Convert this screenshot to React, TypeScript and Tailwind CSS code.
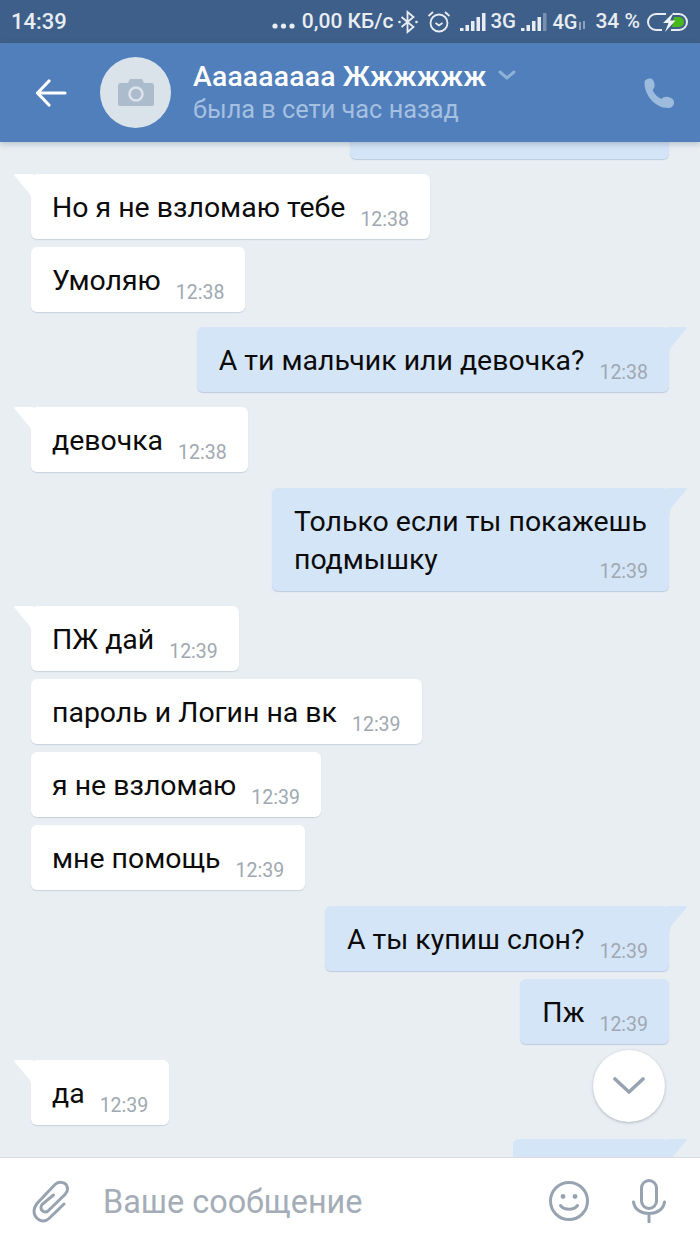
import { ReactNode } from "react";

type Message = {
  text: ReactNode;
  time: string;
  out?: boolean;
  tail?: boolean;
  multiline?: boolean;
  gap: number;
};

const BG = "#e9eef3";

function Tail({ out }: { out?: boolean }) {
  if (out) {
    return (
      <svg className="absolute top-0 -right-[19px]" width="21" height="27" viewBox="0 0 21 27">
        <path d="M0 0H18.500C19.600 0 20.100 .8 19.400 1.700L4.600 19.500C3.400 21 3 22.500 3 25V27H0Z" fill="#d5e5f8" />
      </svg>
    );
  }
  return (
    <svg className="absolute top-0 -left-[18px]" width="20" height="27" viewBox="0 0 20 27">
      <path d="M20 0H2.500C1.400 0 .9 .8 1.600 1.700L16.400 19.500C17.600 21 18 22.500 18 25V27H20Z" fill="#fff" />
    </svg>
  );
}

function Bubble({ m }: { m: Message }) {
  const mt = m.gap === 8 ? "mt-2" : m.gap === 16 ? "mt-4" : "mt-[15px]";
  return (
    <div
      className={`relative flex rounded-[6px] pt-[15px] pb-[7px] ${m.multiline ? "flex-col items-end pr-[22px]" : "items-end gap-[15px] pr-[21px]"} ${mt} ${
        m.out
          ? "self-end mr-[31px] pl-[22px] bg-[#d5e5f8] shadow-[0_1px_1px_rgba(120,150,190,0.4)]"
          : "self-start ml-[31px] pl-[21px] bg-white shadow-[0_1px_1px_rgba(120,140,165,0.28)]"
      }`}
    >
      {m.tail && <Tail out={m.out} />}
      <div className="pb-[5px] text-[28.45px] leading-[38px] text-[#0b0b0b]">{m.text}</div>
      <div className={`text-[19.5px] leading-[24px] text-[#a0a8b2] ${m.multiline ? "-mt-[24px] -mr-px" : ""}`}>{m.time}</div>
    </div>
  );
}

const messages: Message[] = [
  { text: "Но я не взломаю тебе", time: "12:38", tail: true, gap: 15 },
  { text: "Умоляю", time: "12:38", gap: 8 },
  { text: "А ти мальчик или девочка?", time: "12:38", out: true, tail: true, gap: 15 },
  { text: "девочка", time: "12:38", tail: true, gap: 15 },
  {
    text: (
      <>
        Только если ты покажешь
        <br />
        подмышку
      </>
    ),
    time: "12:39",
    out: true,
    tail: true,
    multiline: true,
    gap: 16,
  },
  { text: "ПЖ дай", time: "12:39", tail: true, gap: 15 },
  { text: "пароль и Логин на вк", time: "12:39", gap: 8 },
  { text: "я не взломаю", time: "12:39", gap: 8 },
  { text: "мне помощь", time: "12:39", gap: 8 },
  { text: "А ты купиш слон?", time: "12:39", out: true, tail: true, gap: 16 },
  { text: "Пж", time: "12:39", out: true, gap: 8 },
  { text: "да", time: "12:39", tail: true, gap: 16 },
];

function Signal({ dim }: { dim?: boolean }) {
  return (
    <svg width="27" height="20" viewBox="0 0 27 20" fill="#e8edf3">
      <rect x="0" y="16" width="3.500" height="3" />
      <rect x="5.500" y="13" width="3.500" height="6" />
      <rect x="11" y="9" width="3.500" height="10" />
      <rect x="16.500" y="5" width="3.500" height="14" />
      <rect x="22" y="1" width="3.500" height="18" opacity={dim ? 0.35 : 1} />
    </svg>
  );
}

function StatusBar() {
  return (
    <div className="flex h-[43px] shrink-0 items-center justify-between bg-[#3e5f89] pl-[11px] pr-[10px] text-[21px] font-medium text-[#e8edf3]">
      <span className="text-[22px]">14:39</span>
      <div className="flex items-center">
        <svg width="24" height="6" viewBox="0 0 24 6" fill="#e8edf3" className="mt-[8px]">
          <circle cx="3" cy="3" r="2.600" />
          <circle cx="11.500" cy="3" r="2.600" />
          <circle cx="20" cy="3" r="2.600" />
        </svg>
        <span className="ml-[6px]">0,00 КБ/с</span>
        <svg width="20" height="24" viewBox="0 0 20 24" fill="none" stroke="#e8edf3" strokeWidth="1.800" className="ml-[5px]">
          <path d="M3.500 7l12 10-6 5V2l6 5-12 10" />
          <circle cx="1.500" cy="12" r="1.300" fill="#e8edf3" stroke="none" />
          <circle cx="18.500" cy="12" r="1.300" fill="#e8edf3" stroke="none" />
        </svg>
        <svg width="24" height="24" viewBox="0 0 24 24" fill="none" stroke="#e8edf3" strokeWidth="1.800" className="ml-[9px]">
          <circle cx="12" cy="13" r="8.500" />
          <path d="M8.500 13l3.500 2.400 3.500-2.400M1.500 6l4.500-4M22.500 6L18 2" />
        </svg>
        <div className="ml-[9px] flex items-center">
          <Signal />
        </div>
        <span className="ml-[3px] w-[26px] whitespace-nowrap text-[20.5px]">3G</span>
        <div className="ml-[5px] flex items-center">
          <Signal dim />
        </div>
        <span className="ml-[4px] w-[26px] whitespace-nowrap text-[20px]">4G</span>
        <svg width="8" height="9" viewBox="0 0 8 9" fill="#8ea3bd" className="mt-[8px]">
          <rect x="1" y="1" width="2" height="8" />
          <rect x="5" y="0" width="2" height="8" />
        </svg>
        <span className="ml-[9px]">34 %</span>
        <svg width="44" height="22" viewBox="0 0 44 22" className="ml-[6px]">
          <path d="M20 3H10a8 8 0 0 0 0 16h6M27 3h6a8 8 0 0 1 0 16h-8" fill="none" stroke="#e8edf3" strokeWidth="2" />
          <path d="M28 6h5a5 5 0 0 1 0 10h-7z" fill="#48b81a" />
          <path d="M28 1L17 12h5.500L19 21l10.500-11.500H24z" fill="#f1f4f7" />
        </svg>
      </div>
    </div>
  );
}

function Header() {
  return (
    <div className="relative z-10 flex h-[99px] shrink-0 items-center bg-[#507fbb] shadow-[0_2px_6px_rgba(60,80,110,0.3)]">
      <svg width="32" height="28" viewBox="0 0 32 28" fill="none" stroke="#fff" strokeWidth="3.200" strokeLinecap="round" strokeLinejoin="round" className="ml-[35px]">
        <path d="M30 14H3M14 2L2.500 14 14 26" />
      </svg>
      <div className="ml-[33px] flex h-[71px] w-[71px] items-center justify-center rounded-full bg-[#dae2ea]">
        <svg width="36" height="28" viewBox="0 0 36 28">
          <path
            d="M3 4h7l2-4h12l2 4h7a3 3 0 0 1 3 3v18a2 2 0 0 1-2 2H2a2 2 0 0 1-2-2V7a3 3 0 0 1 3-3z"
            fill="#adbccd"
          />
          <circle cx="18" cy="15" r="6.500" fill="none" stroke="#dae2ea" strokeWidth="2.600" />
        </svg>
      </div>
      <div className="ml-[22px] flex-1">
        <div className="flex items-center">
          <span className="text-[28.3px] font-medium leading-[33px] tracking-[0.2px] text-white">Ааааааааа Жжжжжж</span>
          <svg width="20" height="12" viewBox="0 0 20 12" fill="none" stroke="#8fb0d8" strokeWidth="3" strokeLinecap="round" strokeLinejoin="round" className="ml-[10px]">
            <path d="M3 2l7 6 7-6" />
          </svg>
        </div>
        <div className="text-[25.3px] leading-[33px] text-[#a5c0e0]">была в сети час назад</div>
      </div>
      <svg width="32" height="32" viewBox="0 0 32 32" fill="#9dbcdd" className="mr-[25px]">
        <path d="M1.500 6C1.500 3 4 1.500 7 1.500 9.500 1.500 11 3.500 11.500 7 12 10 11 11.500 9.500 13 11.500 17.500 14.500 20 18.500 22 20 20.500 22 19.500 25 20 28.500 20.500 31 22.500 31 25.500 31 29 28.500 31 25 31 12 31 1.500 18 1.500 6Z" />
      </svg>
    </div>
  );
}

function Composer() {
  return (
    <div className="relative z-10 flex h-[87px] shrink-0 items-center border-t border-[#d8dce0] bg-white">
      <svg width="42" height="46" viewBox="10 8 42 46" fill="none" stroke="#97a3b0" strokeWidth="3" strokeLinecap="round" className="ml-[30px]">
        <path d="M44 34L29 48.500C23 54 14 49 14 41 14 38 15.500 35.500 17 33.500L35 14.500C39 10.500 47.500 12 47.500 19 47.500 21 46.500 23 45 24.500L28 41C25 43.500 21 41 21 37.500 21 36 21.500 35 22.500 34L33.500 25" />
      </svg>
      <div className="ml-[31px] mt-[3px] flex-1 text-[32.4px] text-[#a4adb7]">Ваше сообщение</div>
      <svg width="42" height="42" viewBox="0 0 42 42" fill="none" stroke="#97a3b0" strokeWidth="3" strokeLinecap="round" className="mr-[42px]">
        <circle cx="21" cy="21" r="18.500" />
        <path d="M12.500 25.500c4 5 13 5 17 0" />
        <circle cx="15" cy="16.500" r="2.400" fill="#97a3b0" stroke="none" />
        <circle cx="27" cy="16.500" r="2.400" fill="#97a3b0" stroke="none" />
      </svg>
      <svg width="34" height="44" viewBox="0 0 34 44" fill="none" stroke="#97a3b0" strokeWidth="3" strokeLinecap="round" className="mr-[34px]">
        <rect x="9.500" y="1.500" width="15" height="28" rx="7.500" />
        <path d="M1.500 23c1 7.500 7.500 11.500 15.500 11.500S31.500 30.500 32.500 23M17 35v8" />
      </svg>
    </div>
  );
}

export default function App() {
  return (
    <div className="flex h-[1244px] w-[700px] flex-col overflow-hidden font-['Roboto',sans-serif]" style={{ background: BG }}>
      <StatusBar />
      <Header />
      <div className="relative flex flex-1 flex-col overflow-hidden">
        {/* bubble scrolled mostly under the header */}
        <div className="-mt-[50px] mr-[31px] h-[67px] w-[319px] shrink-0 self-end rounded-[6px] bg-[#d5e5f8] shadow-[0_1px_1px_rgba(120,150,190,0.4)]" />
        {messages.map((m, i) => (
          <Bubble key={i} m={m} />
        ))}
        <div className="relative mt-[14px] mr-[31px] h-[65px] w-[156px] shrink-0 self-end rounded-[6px] bg-[#d5e5f8]">
          <Tail out />
        </div>
        <div className="absolute top-[908px] left-[593px] flex h-[72px] w-[72px] items-center justify-center rounded-full bg-white shadow-[0_1px_3px_rgba(70,80,95,0.35)]">
          <svg width="32" height="20" viewBox="0 0 32 20" fill="none" stroke="#97a3b0" strokeWidth="3.600" strokeLinecap="round" strokeLinejoin="round">
            <path d="M2 3l14 13L30 3" />
          </svg>
        </div>
      </div>
      <Composer />
    </div>
  );
}
